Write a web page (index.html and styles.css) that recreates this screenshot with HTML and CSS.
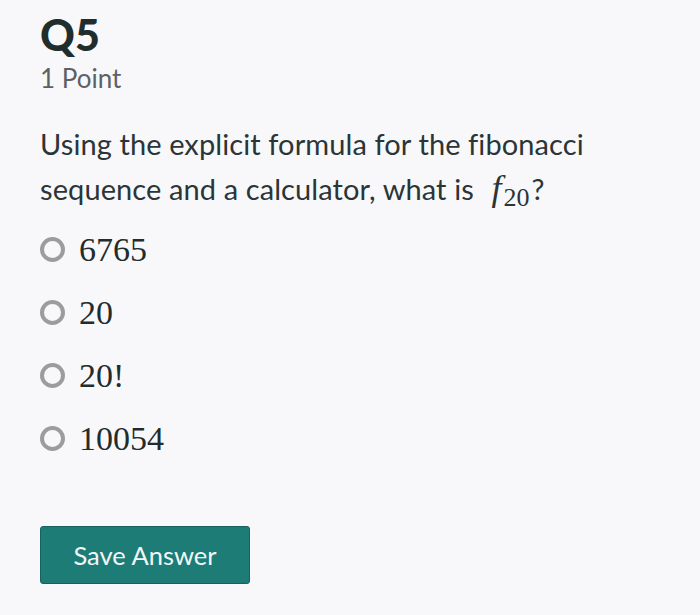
FILE: index.html
```html
<!DOCTYPE html>
<html>
<head>
<meta charset="utf-8">
<link rel="stylesheet" href="styles.css">
</head>
<body>
<div class="page">
  <h1 class="qnum">Q5</h1>
  <div class="points">1 Point</div>
  <p class="question">Using the explicit formula for the fibonacci sequence and a calculator, what is <span class="math"><i>f</i><sub>20</sub></span>?</p>
  <ul class="options">
    <li class="option"><span class="radio"></span><span class="opt-text">6765</span></li>
    <li class="option"><span class="radio"></span><span class="opt-text">20</span></li>
    <li class="option"><span class="radio"></span><span class="opt-text">20!</span></li>
    <li class="option"><span class="radio"></span><span class="opt-text">10054</span></li>
  </ul>
  <button class="save">Save Answer</button>
</div>
</body>
</html>
```

FILE: styles.css
```css
html, body {
  margin: 0;
  padding: 0;
  background: #f8f8fa;
}
body {
  font-family: Lato, "Liberation Sans", sans-serif;
  color: #2b3537;
  width: 700px;
  height: 615px;
  overflow: hidden;
}
.page {
  padding: 12px 0 0 40px;
}
.qnum {
  margin: 0;
  font-size: 43px;
  font-weight: 900;
  line-height: 46px;
  color: #1f2d2d;
}
.points {
  font-size: 26px;
  line-height: 36px;
  color: #5b6265;
  margin-top: 2px;
}
.question {
  margin: 25px 0 0 0;
  font-size: 29px;
  line-height: 45px;
  width: 640px;
  color: #2b3537;
  letter-spacing: 0.1px;
}
.line2-space {
  letter-spacing: 0.3px;
}
.math {
  font-family: "Liberation Serif", serif;
  font-size: 36px;
  margin-left: 10px;
  margin-right: 2px;
  letter-spacing: 0;
}
.math i {
  font-style: italic;
}
.math sub {
  font-size: 26px;
  vertical-align: -6px;
  line-height: 0;
  margin-left: 2px;
}
.options {
  list-style: none;
  margin: 7px 0 0 0;
  padding: 0;
}
.option {
  display: flex;
  align-items: center;
  height: 63px;
}
.radio {
  width: 17px;
  height: 17px;
  border: 4px solid #9c9c9c;
  border-radius: 50%;
  flex: none;
  margin-right: 14px;
}
.opt-text {
  font-family: "Liberation Serif", serif;
  font-size: 34px;
  color: #232c2c;
}
.save {
  margin-top: 56px;
  width: 210px;
  height: 58px;
  background: #1e7c76;
  border: 1px solid #17625e;
  border-radius: 3px;
  color: #f2f7f6;
  font-family: Lato, "Liberation Sans", sans-serif;
  font-size: 25.5px;
  padding: 0;
}
```
